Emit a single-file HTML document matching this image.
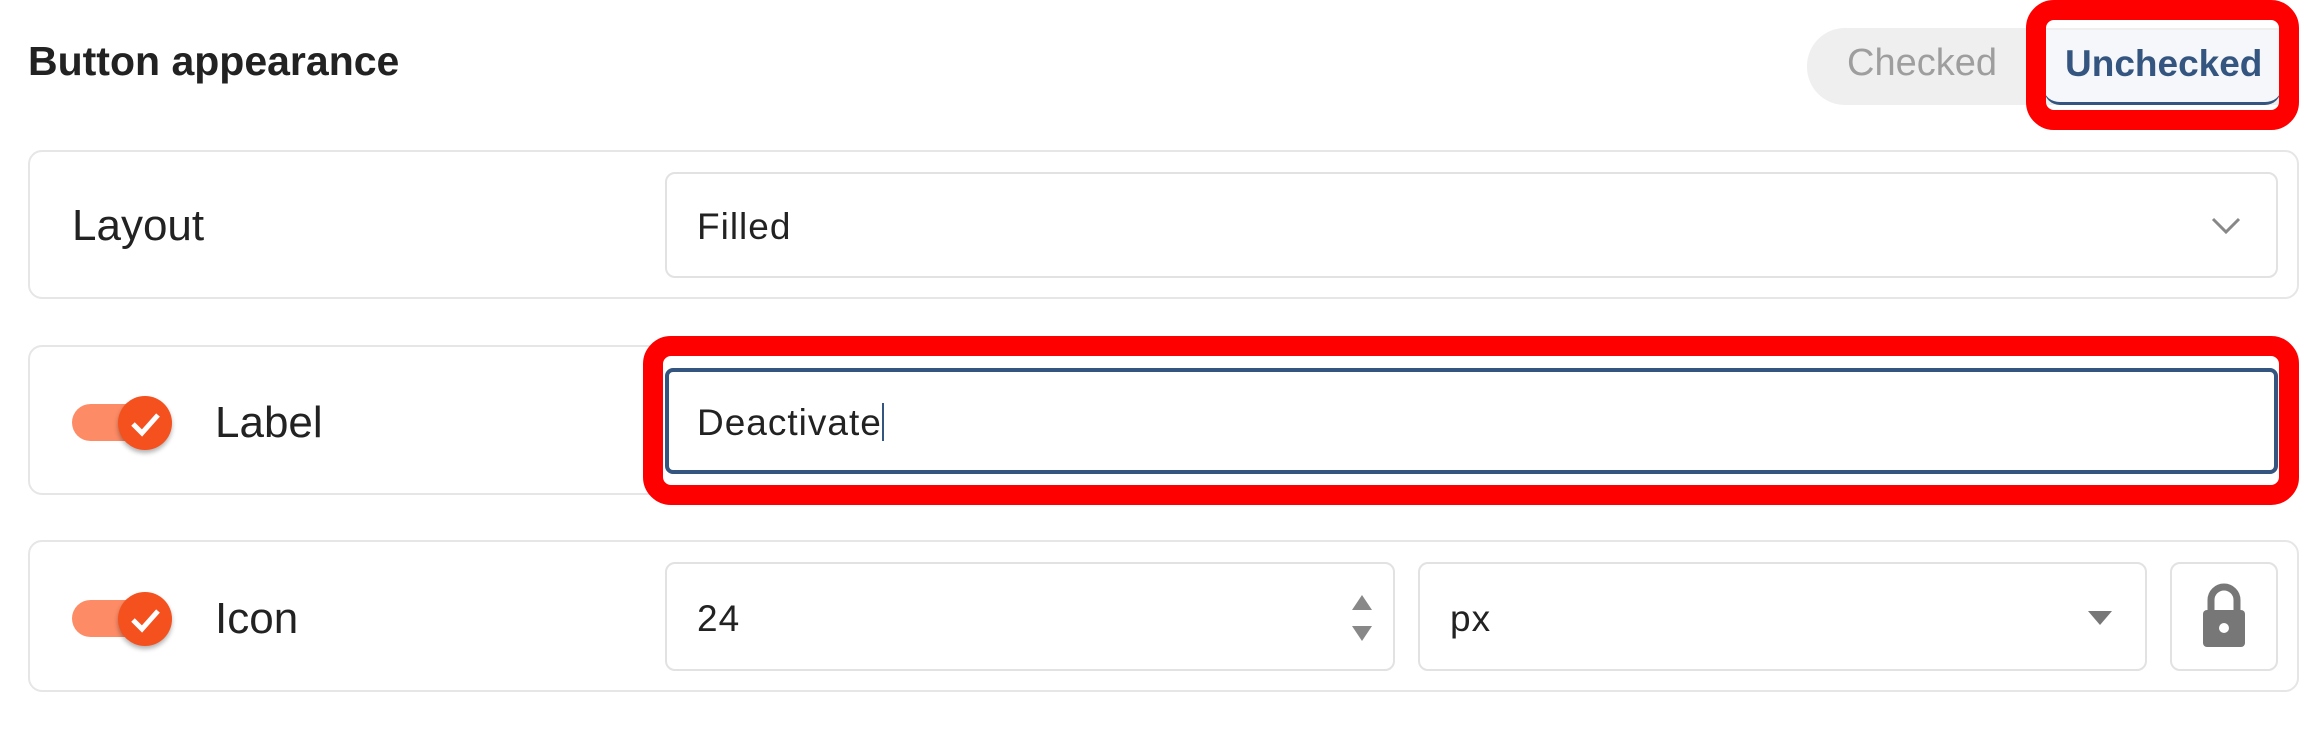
<!DOCTYPE html>
<html><head><style>
body{margin:0;width:2321px;height:730px;background:#fff;font-family:"Liberation Sans",Arial,sans-serif;position:relative;overflow:hidden;color:#222}
.a{position:absolute;box-sizing:border-box}
.card{border:2px solid #e6e6e6;border-radius:14px;left:28px;width:2271px}
.inp{border:2px solid #e2e2e2;border-radius:10px}
.lbl{font-size:44px;color:#222}
.val{font-size:37px;color:#222;letter-spacing:1px}
.red{border:20px solid #ff0000;border-radius:28px}
.tog{width:85px;height:37px;border-radius:19px;background:#fd8b66;left:72px}
.knob{width:54px;height:54px;border-radius:50%;background:#f4511e;box-shadow:0 3px 5px rgba(0,0,0,.3)}
</style></head><body>
<div class="a" style="left:28px;top:38px;font-size:41px;font-weight:bold;color:#222">Button appearance</div>

<div class="a" style="left:1807px;top:28px;width:474px;height:77px;background:#efefef;border-radius:38px 0 0 38px"></div>
<div class="a" style="left:1847px;top:42px;font-size:38px;color:#9e9e9e">Checked</div>
<div class="a" style="left:2044px;top:30px;width:237px;height:75px;background:#f5f7fa;border-bottom:3px solid #34557f;border-radius:0 0 16px 16px"></div>
<div class="a" style="left:2065px;top:43px;font-size:37px;font-weight:bold;color:#34557f">Unchecked</div>
<div class="a red" style="left:2026px;top:0;width:273px;height:130px"></div>

<div class="a card" style="top:150px;height:149px"></div>
<div class="a lbl" style="left:72px;top:201px">Layout</div>
<div class="a inp" style="left:665px;top:172px;width:1613px;height:106px"></div>
<div class="a val" style="left:697px;top:206px">Filled</div>
<svg class="a" style="left:2210px;top:215px" width="32" height="20" viewBox="0 0 32 20"><path d="M3 4l13 13 13-13" stroke="#888" stroke-width="3" fill="none"/></svg>

<div class="a card" style="top:345px;height:150px"></div>
<div class="a tog" style="top:404px"></div>
<div class="a knob" style="left:118px;top:396px"></div>
<svg class="a" style="left:118px;top:396px" width="54" height="54"><path d="M15 28l9 9 16-18" stroke="#fff" stroke-width="5" fill="none"/></svg>
<div class="a lbl" style="left:215px;top:398px">Label</div>
<div class="a" style="left:665px;top:368px;width:1613px;height:106px;border:4px solid #34557f;border-radius:8px"></div>
<div class="a val" style="left:697px;top:402px">Deactivate<span style="display:inline-block;width:2px;height:38px;background:#34557f;vertical-align:-6px"></span></div>
<div class="a red" style="left:643px;top:336px;width:1656px;height:169px"></div>

<div class="a card" style="top:540px;height:152px"></div>
<div class="a tog" style="top:600px"></div>
<div class="a knob" style="left:118px;top:592px"></div>
<svg class="a" style="left:118px;top:592px" width="54" height="54"><path d="M15 28l9 9 16-18" stroke="#fff" stroke-width="5" fill="none"/></svg>
<div class="a lbl" style="left:215px;top:594px">Icon</div>
<div class="a inp" style="left:665px;top:562px;width:730px;height:109px"></div>
<div class="a val" style="left:697px;top:598px">24</div>
<svg class="a" style="left:1349px;top:592px" width="26" height="52"><path d="M13 3L23 18H3Z M13 49L23 34H3Z" fill="#888"/></svg>
<div class="a inp" style="left:1418px;top:562px;width:729px;height:109px"></div>
<div class="a val" style="left:1450px;top:598px">px</div>
<svg class="a" style="left:2086px;top:609px" width="28" height="18"><path d="M2 2H26L14 16Z" fill="#777"/></svg>
<div class="a inp" style="left:2170px;top:562px;width:108px;height:109px"></div>
<svg class="a" style="left:2198px;top:580px" width="52" height="70" viewBox="0 0 52 70"><path d="M13 32V20a13 13 0 0 1 26 0v12" stroke="#777" stroke-width="7" fill="none"/><rect x="5" y="30" width="42" height="37" rx="4" fill="#777"/><circle cx="26" cy="48" r="5" fill="#fff"/></svg>
</body></html>
